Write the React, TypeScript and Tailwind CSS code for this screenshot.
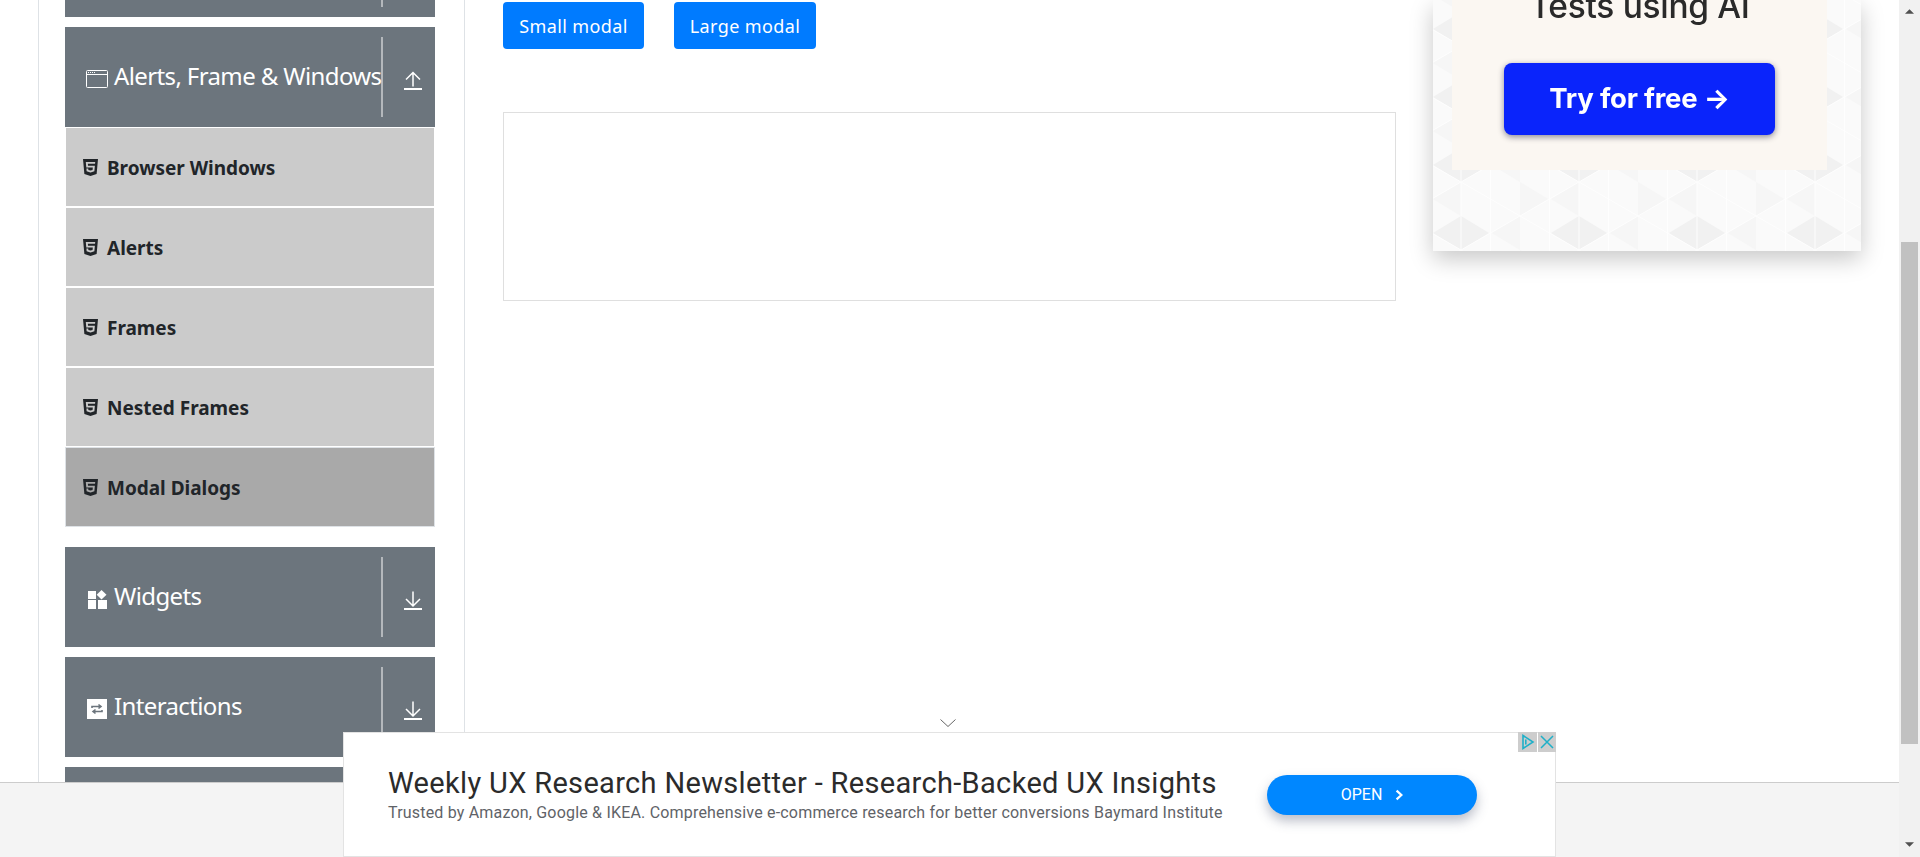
import { ReactNode } from "react"

const bodyFont = "font-['Noto_Sans','Open_Sans',sans-serif]"
const adFont = "font-['Roboto','Inter',sans-serif]"

const subItems = ["Browser Windows", "Alerts", "Frames", "Nested Frames", "Modal Dialogs"]

const Html5Icon = () => (
  <svg viewBox="0 32 384 448" preserveAspectRatio="none" className="w-[15px] h-[17px] shrink-0 fill-[#212529]">
    <path d="M0 32l34.9 395.8L191.5 480l157.6-52.2L384 32H0zm308.2 127.9H124.4l4.1 49.4h175.6l-13.6 148.4-97.9 27v.3h-1.1l-98.7-27.3-6-75.8h47.7L138 320l53.5 14.5 53.7-14.5 6-62.2H84.3L71.5 112.2h241.1l-4.4 47.7z" />
  </svg>
)

const WindowIcon = () => (
  <svg viewBox="0 0 22 18" className="w-[22px] h-[18px] shrink-0 fill-none stroke-white">
    <rect x="0.5" y="0.5" width="21" height="17" rx="1" />
    <path d="M0.5 4.5h21" />
    <path d="M2 2.5h1M4 2.5h1M6 2.5h1M8 2.5h1" />
  </svg>
)

const WidgetsIcon = () => (
  <svg viewBox="0 0 19 19" className="w-[19px] h-[19px] shrink-0 fill-white">
    <rect x="0" y="1" width="8" height="8" />
    <rect x="0" y="10" width="8" height="9" />
    <rect x="10" y="10" width="9" height="9" />
    <path d="M13.5 0l5 4.8-5 4.7-4.8-4.7z" />
  </svg>
)

const InteractionsIcon = () => (
  <svg viewBox="0 0 20 20" className="w-5 h-5 shrink-0">
    <rect width="20" height="20" fill="#fff" />
    <path d="M5 9V7.5h8.5M11.5 5.5l2.5 2-2.5 2M15 11v1.5H6.5M8.5 10.5l-2.5 2 2.5 2" fill="none" stroke="#6c757d" strokeWidth="1.6" />
  </svg>
)

// arrow over a bar, both directions keep the bar at the bottom
const ToggleArrow = ({ open }: { open?: boolean }) => (
  <svg viewBox="0 0 18 19" className="w-[18px] h-[19px] fill-none stroke-white">
    {open ? (
      <path d="M9 15.5V1.5M2 8.5l7-7 7 7" strokeWidth="1.5" />
    ) : (
      <path d="M9 0.5v14.5M2 8l7 7 7-7" strokeWidth="1.5" />
    )}
    <path d="M0 18h18" strokeWidth="2" />
  </svg>
)

const GroupHeader = ({ icon, label, open }: { icon: ReactNode; label: string; open?: boolean }) => (
  <div className="h-[100px] bg-[#6c757d] flex shrink-0 text-white">
    <div className="w-[316px] flex items-center pl-[21px] pt-[4px] gap-[6px]">
      <span className="w-[22px] flex justify-center shrink-0">{icon}</span>
      <span className="text-[24px] leading-none tracking-[-0.62px] whitespace-nowrap relative top-[-3px]">{label}</span>
    </div>
    <div className="w-[2px] h-[80px] mt-[10px] bg-[#b4b8bc]" />
    <div className="flex-1 pt-[44px] pl-[21px]">
      <ToggleArrow open={open} />
    </div>
  </div>
)

const SubItem = ({ label, active }: { label: string; active?: boolean }) => (
  <div className={`h-[80px] border flex items-center pl-[17px] gap-[9px] text-[#212529] ${active ? "bg-[#a9a9a9] border-[#dee2e6]" : "bg-[#cbcbcb] border-white"}`}>
    <Html5Icon />
    <span className="text-[19px] font-bold tracking-[-0.02px] leading-none relative top-[1px]">{label}</span>
  </div>
)

const Sidebar = () => (
  <aside className="ml-[38px] w-[427px] h-full border-x border-[#dee2e6] shrink-0 pl-[26px] pr-[29px] flex flex-col">
    <div className="h-[17px] bg-[#6c757d] shrink-0 flex">
      <div className="w-[316px]" />
      <div className="w-[2px] h-[7px] bg-[#b4b8bc]" />
    </div>
    <div className="mt-[10px]">
      <GroupHeader icon={<WindowIcon />} label="Alerts, Frame & Windows" open />
    </div>
    <div className="flex flex-col">
      {subItems.map((item) => (
        <SubItem key={item} label={item} active={item === "Modal Dialogs"} />
      ))}
    </div>
    <div className="mt-[20px] flex flex-col gap-[10px]">
      <GroupHeader icon={<WidgetsIcon />} label="Widgets" />
      <GroupHeader icon={<InteractionsIcon />} label="Interactions" />
      <div className="h-[100px] bg-[#6c757d] shrink-0" />
    </div>
  </aside>
)

const AdPattern = () => (
  <svg className="absolute inset-0 w-full h-full" aria-hidden="true">
    <defs>
      <pattern id="tri" width="118" height="68" patternUnits="userSpaceOnUse" patternTransform="translate(-31 -22)">
        <rect width="118" height="68" fill="#fafafa" />
        <path d="M59 34l-28 17 28 17zM59 34l28 17-28 17z" fill="#f1f1f1" />
        <path d="M0 0l28 17-28 17zM59 0L31 17l28 17zM118 34L90 51l28 17z" fill="#f6f6f6" />
        <path d="M29.5 0v68M59 0v68M88.5 0v68M0 34l59-34 59 34M0 34l59 34 59-34" fill="none" stroke="#fefefe" strokeWidth="1" />
      </pattern>
    </defs>
    <rect width="100%" height="100%" fill="url(#tri)" />
  </svg>
)

const SideAd = () => (
  <div className="relative w-[428px] h-[251px] ml-[37px] shrink-0 shadow-[0_8px_22px_rgba(0,0,0,0.22)] overflow-hidden">
    <AdPattern />
    <div className="relative mx-[19px] w-[375px] h-[170px] bg-[#fbf7f2] flex flex-col items-center">
      <p className="text-[33.5px] leading-none font-['Inter',sans-serif] font-medium text-[#2a2a2a] mt-[-10px] tracking-[-0.3px] blur-[0.4px] whitespace-nowrap">Tests using AI</p>
      <div className="mt-[39px] w-[271px] h-[72px] rounded-[8px] bg-[#0a24fb] shadow-[0_2px_6px_rgba(0,0,40,0.45)] flex items-center justify-center font-['Inter',sans-serif] font-bold text-white text-[27.5px] tracking-[-0.2px] blur-[0.4px]">
        Try for free →
      </div>
    </div>
  </div>
)

const Content = () => (
  <section className="w-[893px] ml-[38px] shrink-0 pt-[2px]">
    <div className="flex gap-[30px]">
      <button className="w-[141px] h-[47px] bg-[#007bff] rounded-[4px] text-white text-[18px] tracking-[0.4px] pt-[1px]">Small modal</button>
      <button className="w-[142px] h-[47px] bg-[#007bff] rounded-[4px] text-white text-[18px] tracking-[0.4px] pt-[1px]">Large modal</button>
    </div>
    <div className="mt-[63px] h-[189px] border border-[#dfdfdf]" />
  </section>
)

const BottomAd = () => (
  <div className={`absolute left-[343px] top-[732px] w-[1213px] h-[125px] bg-white border border-[#e3e3e3] ${adFont}`}>
    <div className="absolute right-[-1px] top-[-1px] flex gap-[1px]">
      <div className="w-[19px] h-[20px] bg-[#cdcdcd] flex items-center justify-center">
        <svg viewBox="0 0 14 16" className="w-[14px] h-[16px] fill-none stroke-[#1fb0c8] stroke-[1.6]">
          <path d="M2 1.5l10 6.5-10 6.5zM4.8 5.5v5" />
        </svg>
      </div>
      <div className="w-[18px] h-[20px] bg-[#cdcdcd] flex items-center justify-center">
        <svg viewBox="0 0 14 14" className="w-[14px] h-[14px] fill-none stroke-[#1fb0c8] stroke-[1.5]">
          <path d="M1 1l12 12M13 1L1 13" />
        </svg>
      </div>
    </div>
    <div className="flex h-full">
      <div className="ml-[44px] mt-[32px] w-[879px]">
        <p className="text-[29px] leading-[36px] tracking-[0.33px] text-[#2b2b2b] whitespace-nowrap">Weekly UX Research Newsletter - Research-Backed UX Insights</p>
        <p className="text-[16px] leading-[22px] mt-[1px] tracking-[0.19px] text-[#5f6368] whitespace-nowrap">Trusted by Amazon, Google &amp; IKEA. Comprehensive e-commerce research for better conversions Baymard Institute</p>
      </div>
      <div className="mt-[42px] w-[210px] h-[40px] rounded-[20px] bg-[#0087ff] shadow-[0_6px_12px_rgba(60,70,100,0.35)] flex items-center justify-center gap-[13px] text-white text-[16px]">
        OPEN
        <svg viewBox="0 0 10 14" className="w-[8px] h-[12px] fill-none stroke-white stroke-[2.8]"><path d="M2 1.5L8 7l-6 5.5" /></svg>
      </div>
    </div>
  </div>
)

const Scrollbar = () => (
  <div className="w-[21px] h-full bg-[#f1f1f1] shrink-0 flex flex-col items-center">
    <svg viewBox="0 0 10 5" className="w-[9px] h-[5px] mt-[9px] fill-[#505050] shrink-0"><path d="M5 0l5 5H0z" /></svg>
    <div className="w-[17px] h-[502px] bg-[#c1c1c1] mt-[228px] shrink-0" />
    <svg viewBox="0 0 10 5" className="w-[9px] h-[5px] mt-[98px] fill-[#505050] shrink-0"><path d="M5 5l5-5H0z" /></svg>
  </div>
)

export default function App() {
  return (
    <div className={`relative w-[1920px] h-[857px] overflow-hidden bg-white flex ${bodyFont}`}>
      <div className="w-[1899px] h-full flex flex-col shrink-0">
        <div className="h-[782px] flex overflow-hidden shrink-0">
          <Sidebar />
          <Content />
          <SideAd />
        </div>
        <footer className="flex-1 bg-[#f4f4f4] border-t border-[#cccccc]" />
      </div>
      <Scrollbar />
      <svg viewBox="0 0 16 8" className="absolute left-[940px] top-[719px] w-[16px] h-[8px] fill-none stroke-[#666]"><path d="M0.5 0.5L8 7.5l7.5-7" /></svg>
      <BottomAd />
    </div>
  )
}
